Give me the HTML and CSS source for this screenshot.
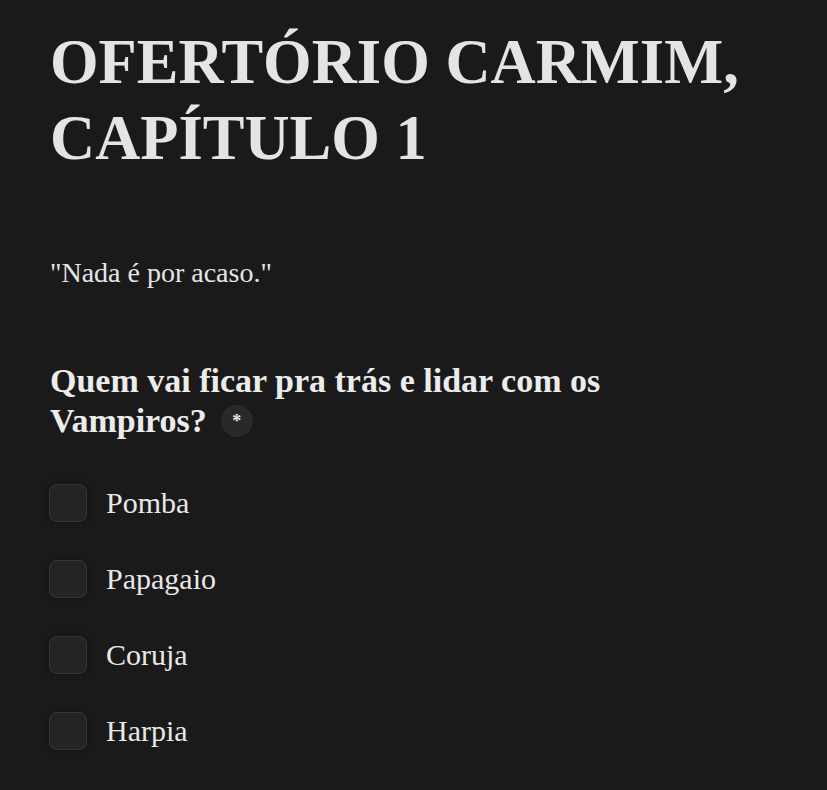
FILE: index.html
```html
<!DOCTYPE html>
<html lang="pt">
<head>
<meta charset="utf-8">
<link rel="stylesheet" href="styles.css">
</head>
<body>
<main class="form">
  <h1 class="title">OFERTÓRIO CARMIM,<br>CAPÍTULO 1</h1>
  <p class="desc">"Nada é por acaso."</p>
  <h2 class="question"><span class="q-part">Quem vai ficar pra trás e lidar com os</span> <span class="q-part">Vampiros?</span><span class="req">*</span></h2>
  <ul class="options">
    <li class="option"><span class="box"></span><span class="label">Pomba</span></li>
    <li class="option"><span class="box"></span><span class="label">Papagaio</span></li>
    <li class="option"><span class="box"></span><span class="label">Coruja</span></li>
    <li class="option"><span class="box"></span><span class="label">Harpia</span></li>
  </ul>
</main>
</body>
</html>
```

FILE: styles.css
```css
html, body {
  margin: 0;
  padding: 0;
  background: #1b1a1a;
}
body {
  font-family: "Liberation Serif", "DejaVu Serif", serif;
  color: #e6e6e6;
  width: 827px;
  height: 790px;
  overflow: hidden;
}
.form {
  padding: 24px 50px 0 50px;
}
.title {
  margin: 0;
  font-size: 62.5px;
  line-height: 76px;
  font-weight: 700;
  color: #e4e4e4;
}
.desc {
  margin: 81px 0 0 0;
  font-size: 28px;
  line-height: 32px;
  color: #e6e6e6;
}
.question {
  margin: 72px 0 0 0;
  font-size: 34px;
  line-height: 40px;
  font-weight: 700;
  color: #ececec;
  max-width: 660px;
}
.q-part {
  white-space: nowrap;
}
.req {
  display: inline-flex;
  align-items: center;
  justify-content: center;
  width: 32px;
  height: 32px;
  border-radius: 50%;
  background: #2a2929;
  font-size: 18px;
  line-height: 1;
  vertical-align: 5px;
  margin-left: 14px;
  color: #e6e6e6;
}
.options {
  list-style: none;
  margin: 43px 0 0 -1px;
  padding: 0;
  display: flex;
  flex-direction: column;
  gap: 38px;
}
.option {
  display: flex;
  align-items: center;
  gap: 19px;
  height: 38px;
}
.box {
  width: 36px;
  height: 36px;
  border: 1px solid #383737;
  border-radius: 8px;
  background: #252424;
  box-shadow: 0 0 6px rgba(0,0,0,0.3);
}
.label {
  font-size: 30px;
  color: #e8e8e8;
}
```
